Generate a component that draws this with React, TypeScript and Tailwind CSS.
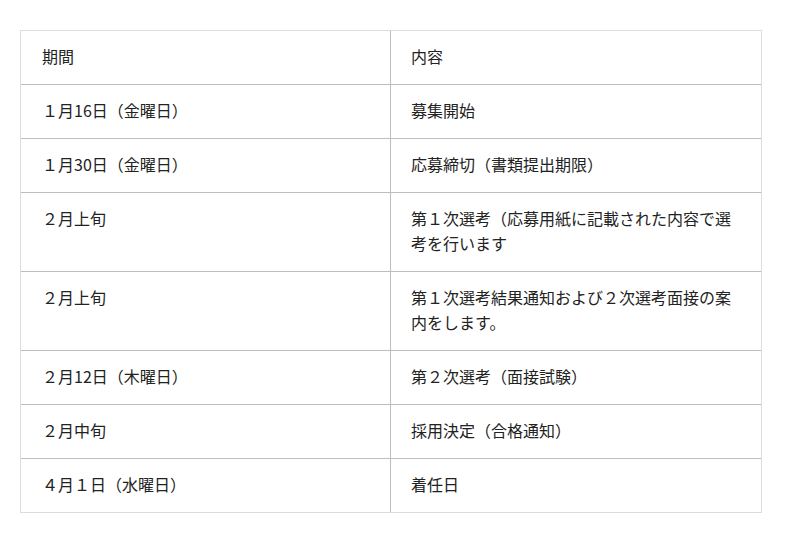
import React from 'react';

const rows: [string, string][] = [
  ['期間', '内容'],
  ['１月16日（金曜日）', '募集開始'],
  ['１月30日（金曜日）', '応募締切（書類提出期限）'],
  ['２月上旬', '第１次選考（応募用紙に記載された内容で選考を行います'],
  ['２月上旬', '第１次選考結果通知および２次選考面接の案内をします。'],
  ['２月12日（木曜日）', '第２次選考（面接試験）'],
  ['２月中旬', '採用決定（合格通知）'],
  ['４月１日（水曜日）', '着任日'],
];

const App: React.FC = () => {
  return (
    <div className="w-[800px] h-[543px] bg-white pt-[30px] pl-[20px] font-['Noto_Sans_CJK_JP',sans-serif] text-[16px] leading-[25px] text-[#222]">
      <div className="w-[742px] border border-[#dcdcdc]">
        {rows.map(([period, content], i) => (
          <div
            key={i}
            className={`grid grid-cols-[369px_371px] ${i > 0 ? 'border-t border-[#bdbdbd]' : ''}`}
          >
            <div className="px-[21px] pt-[13px] pb-[15px]">{period}</div>
            <div className="border-l border-[#bdbdbd] pl-[20px] pr-[21px] pt-[13px] pb-[15px]">{content}</div>
          </div>
        ))}
      </div>
    </div>
  );
};

export default App;
